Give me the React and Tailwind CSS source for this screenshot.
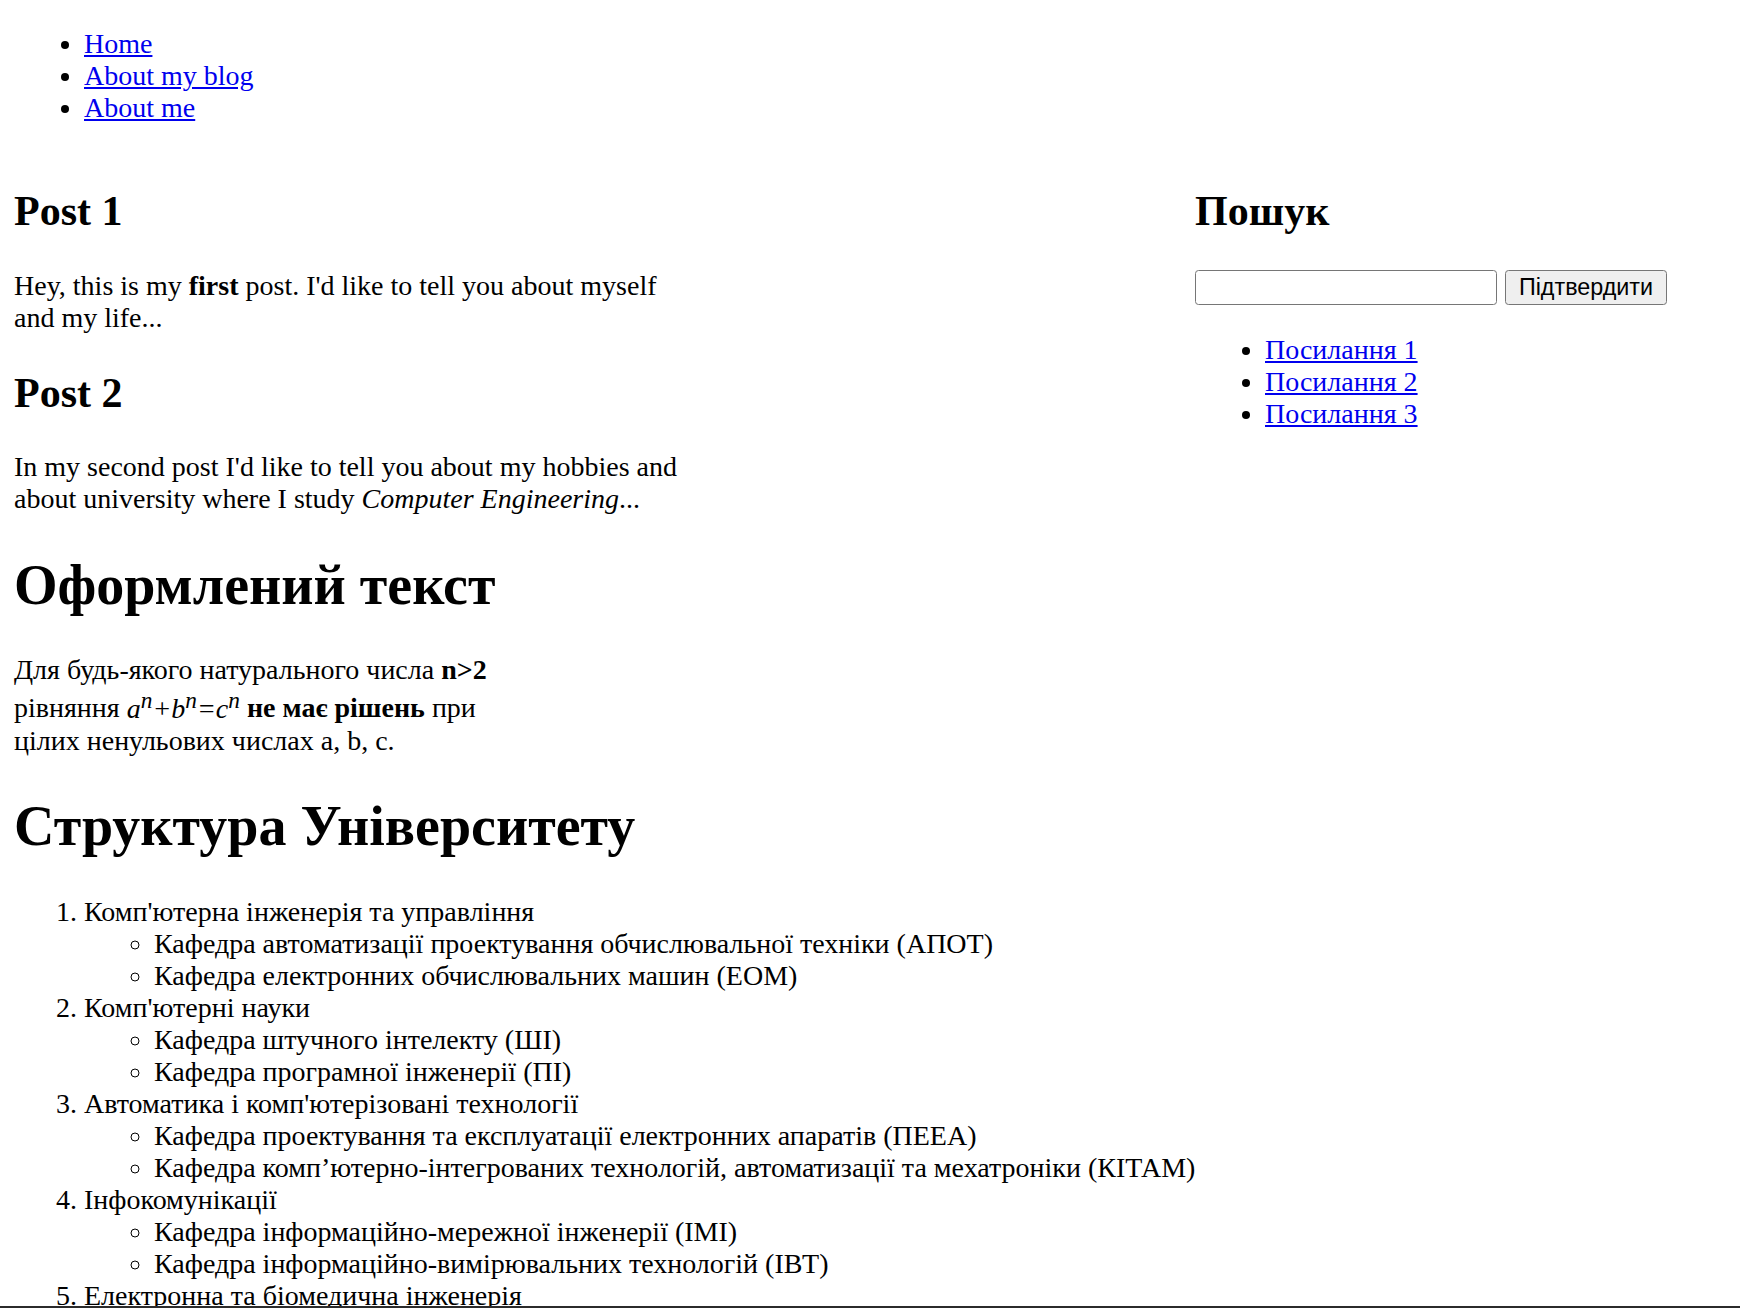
import React from "react";

const Link = ({ children }) => (
  <a href="#" className="text-[#0000ee] underline">
    {children}
  </a>
);

export default function App() {
  return (
    <div className="relative h-[1308px] overflow-hidden bg-white text-black font-['Liberation_Serif','Times_New_Roman',serif] text-[28px] leading-[normal] px-[14px] pt-[28px]">
      <nav>
        <ul className="list-disc pl-[70px] mb-[28px]">
          <li><Link>Home</Link></li>
          <li><Link>About my blog</Link></li>
          <li><Link>About me</Link></li>
        </ul>
      </nav>

      <div className="flex justify-between items-start">
        <main className="w-[685px]">
          <h2 className="text-[42px] font-bold my-[34.86px]">Post 1</h2>
          <p className="my-[28px]">
            Hey, this is my <b>first</b> post. I'd like to tell you about myself and my life...
          </p>
          <h2 className="text-[42px] font-bold my-[34.86px]">Post 2</h2>
          <p className="mt-[28px] mb-0">
            In my second post I'd like to tell you about my hobbies and about university where I study{" "}
            <i>Computer Engineering</i>...
          </p>
        </main>

        <aside className="w-[531px]">
          <h2 className="text-[42px] font-bold my-[34.86px]">Пошук</h2>
          <form className="flex items-center gap-[8px]" onSubmit={(e) => e.preventDefault()}>
            <input
              type="text"
              className="w-[302px] h-[35px] border border-[#767676] rounded-[3.5px] bg-white px-[3.5px] text-[23.33px] font-['Liberation_Sans',Arial,sans-serif] outline-none"
            />
            <button
              type="submit"
              className="w-[162px] h-[35px] border border-[#767676] rounded-[3.5px] bg-[#efefef] text-[23.33px] leading-[normal] font-['Liberation_Sans',Arial,sans-serif] text-black flex items-center justify-center"
            >
              Підтвердити
            </button>
          </form>
          <ul className="list-disc pl-[70px] mt-[29px]">
            <li><Link>Посилання 1</Link></li>
            <li><Link>Посилання 2</Link></li>
            <li><Link>Посилання 3</Link></li>
          </ul>
        </aside>
      </div>

      <section>
        <h1 className="text-[56px] font-bold my-[37.52px]">Оформлений текст</h1>
        <p className="w-[514px] my-[28px]">
          Для будь-якого натурального числа <b>n&gt;2</b> рівняння{" "}
          <i>
            a<sup className="static align-super text-[23.33px] leading-[normal]">n</sup>+b
            <sup className="static align-super text-[23.33px] leading-[normal]">n</sup>=c
            <sup className="static align-super text-[23.33px] leading-[normal]">n</sup>
          </i>{" "}
          <b>не має рішень</b> при цілих ненульових числах a, b, c.
        </p>
      </section>

      <section>
        <h1 className="text-[56px] font-bold my-[37.52px]">Структура Університету</h1>
        <ol className="list-decimal pl-[70px] my-[28px]">
          <li>
            Комп'ютерна інженерія та управління
            <ul className="list-[circle] pl-[70px]">
              <li>Кафедра автоматизації проектування обчислювальної техніки (АПОТ)</li>
              <li>Кафедра електронних обчислювальних машин (ЕОМ)</li>
            </ul>
          </li>
          <li>
            Комп'ютерні науки
            <ul className="list-[circle] pl-[70px]">
              <li>Кафедра штучного інтелекту (ШІ)</li>
              <li>Кафедра програмної інженерії (ПІ)</li>
            </ul>
          </li>
          <li>
            Автоматика і комп'ютерізовані технології
            <ul className="list-[circle] pl-[70px]">
              <li>Кафедра проектування та експлуатації електронних апаратів (ПЕЕА)</li>
              <li>Кафедра комп’ютерно-інтегрованих технологій, автоматизації та мехатроніки (КІТАМ)</li>
            </ul>
          </li>
          <li>
            Інфокомунікації
            <ul className="list-[circle] pl-[70px]">
              <li>Кафедра інформаційно-мережної інженерії (ІМІ)</li>
              <li>Кафедра інформаційно-вимірювальних технологій (ІВТ)</li>
            </ul>
          </li>
          <li>
            Електронна та біомедична інженерія
            <ul className="list-[circle] pl-[70px]">
              <li>Кафедра електронної інженерії (ЕІ)</li>
              <li>Кафедра біомедичної інженерії (БМІ)</li>
            </ul>
          </li>
        </ol>
      </section>

      <div className="absolute left-0 right-0 bottom-0 h-[2px] bg-[#2b2b2b]" />
    </div>
  );
}
